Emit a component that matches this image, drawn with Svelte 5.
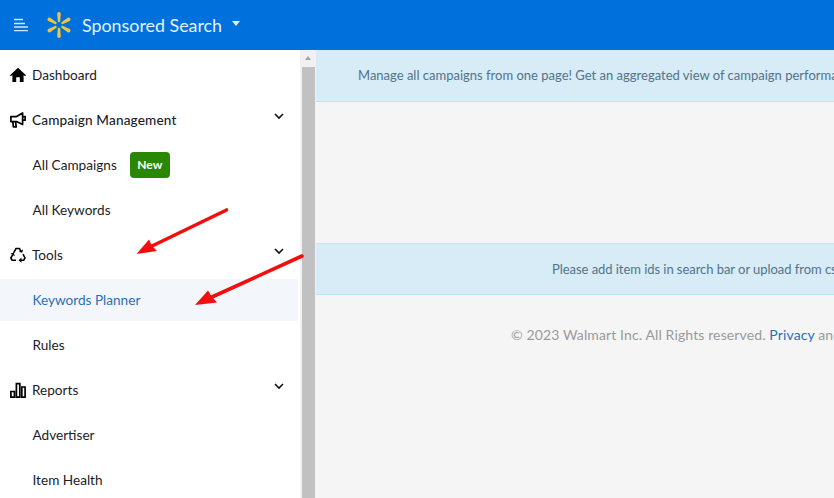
<script>
  const spark = [0, 60, 120, 180, 240, 300];
</script>

<div class="page">
  <header class="top">
    <svg class="burger" width="16" height="14" viewBox="0 0 16 14" aria-hidden="true">
      <path d="M0 1.5H9M0 5.5H11M0 9H14M0 12.7H14" stroke="#cfe6fb" stroke-width="1.3" fill="none" />
    </svg>
    <svg class="spark" width="28" height="28" viewBox="0 0 28 28" aria-hidden="true">
      {#each spark as a}
        <path d="M12.2 2.8a1.8 1.8 0 0 1 3.6 0L15.2 10a1.2 1.2 0 0 1-2.4 0Z" fill="#f2c33d" transform="rotate({a} 14 14)" />
      {/each}
    </svg>
    <span class="brand">Sponsored Search</span>
    <span class="caret"></span>
  </header>

  <div class="body">
    <nav class="side">
      <div class="row head">
        <svg class="ico" width="16" height="16" viewBox="0 0 16 16" aria-hidden="true">
          <path d="M8 0.8 0 8.2 1 9.2 2.4 8V15H6.2V10.3H9.8V15H13.6V8L15 9.2 16 8.2Z" fill="#000" />
        </svg>
        <span>Dashboard</span>
      </div>
      <div class="row head strong">
        <svg class="ico" width="16" height="16" viewBox="0 0 16 16" aria-hidden="true">
          <path d="M0.9 4.6H6.6L12.6 1V12.4L6.6 9.6H0.9Z M12.6 4.6H15.2V8.2H12.6 M2.8 9.8 3.4 14.9H6.2L5.6 9.8" fill="none" stroke="#000" stroke-width="1.7" stroke-linejoin="round" />
        </svg>
        <span>Campaign Management</span>
        <svg class="chev" width="10" height="7" viewBox="0 0 10 7" aria-hidden="true"><path d="M1 1 5 5 9 1" fill="none" stroke="#111" stroke-width="1.6" /></svg>
      </div>
      <div class="row sub">
        <span>All Campaigns</span>
        <span class="badge">New</span>
      </div>
      <div class="row sub"><span>All Keywords</span></div>
      <div class="row head">
        <svg class="ico" width="16" height="16" viewBox="0 0 16 16" aria-hidden="true">
          <path d="M3.6 5.8 6 1.5H9.4L11 4.3M13 7.2 15 11 13.7 13.2H10.6M6 13.2H2.1L0.8 11 2.8 7.6" fill="none" stroke="#000" stroke-width="1.6" />
          <path d="M8.7 4.8 12.2 5.7 13.1 2.4ZM11.5 10.6 8.6 13.2 11.5 15.8ZM0.4 6.6 3.7 5.8 4.8 9.2Z" fill="#000" />
        </svg>
        <span>Tools</span>
        <svg class="chev" width="10" height="7" viewBox="0 0 10 7" aria-hidden="true"><path d="M1 1 5 5 9 1" fill="none" stroke="#111" stroke-width="1.6" /></svg>
      </div>
      <div class="row sub active"><span>Keywords Planner</span></div>
      <div class="row sub"><span>Rules</span></div>
      <div class="row head">
        <svg class="ico" width="16" height="16" viewBox="0 0 16 16" aria-hidden="true">
          <path d="M0.9 9.5H4.4V15.1H0.9ZM6.4 1.7H9.8V15.1H6.4ZM11.8 5H15.1V15.1H11.8Z" fill="none" stroke="#000" stroke-width="1.7" />
        </svg>
        <span>Reports</span>
        <svg class="chev" width="10" height="7" viewBox="0 0 10 7" aria-hidden="true"><path d="M1 1 5 5 9 1" fill="none" stroke="#111" stroke-width="1.6" /></svg>
      </div>
      <div class="row sub"><span>Advertiser</span></div>
      <div class="row sub"><span>Item Health</span></div>
    </nav>

    <div class="scroll">
      <div class="up"></div>
      <div class="thumb"></div>
    </div>

    <main class="main">
      <div class="note first"><span>Manage all campaigns from one page! Get an aggregated view of campaign performance and manage them with ease.</span></div>
      <div class="note second"><span>Please add item ids in search bar or upload from csv file to see keyword suggestions here.</span></div>
      <p class="foot">© 2023 Walmart Inc. All Rights reserved. <a href="#privacy">Privacy</a> and Terms of use apply to this page.</p>
    </main>
  </div>

  <svg class="arrows" width="834" height="498" viewBox="0 0 834 498" aria-hidden="true">
    <path d="M226.5 210 152 246" stroke="#f40d0d" stroke-width="3.6" stroke-linecap="round" />
    <path d="M136.5 254 149 239.5 152 246 157 251Z" fill="#f40d0d" />
    <path d="M302 256 212 297" stroke="#f40d0d" stroke-width="3.6" stroke-linecap="round" />
    <path d="M195 305 208 290.5 212 297 217 302.5Z" fill="#f40d0d" />
  </svg>
</div>

<style>
  :global(body) { margin: 0; }
  .page {
    position: relative;
    width: 834px;
    height: 498px;
    overflow: hidden;
    font-family: Lato, "Noto Sans", sans-serif;
    background: #f5f5f5;
  }
  .top {
    height: 50px;
    background: #0071dc;
    display: flex;
    align-items: center;
    padding-left: 14px;
    box-sizing: border-box;
    color: #e6f1fc;
  }
  .burger { margin-right: 15px; }
  .spark { margin-right: 9px; }
  .brand { font-size: 17.85px; margin-bottom: 1px; }
  .caret {
    margin-left: 10px;
    margin-bottom: 3px;
    border-left: 4.5px solid transparent;
    border-right: 4.5px solid transparent;
    border-top: 5px solid #e6f1fc;
  }
  .body { display: flex; height: 448px; }
  .side { width: 300px; flex: none; background: #fff; padding-top: 2px; box-sizing: border-box; }
  .row {
    height: 45px;
    display: flex;
    align-items: center;
    font-size: 13.6px;
    color: #1c1c28;
    box-sizing: border-box;
    position: relative;
  }
  .head { padding-left: 10px; }
  .ico { width: 16px; margin-right: 6px; flex: none; }
  .sub { padding-left: 32.5px; }
  .strong { font-weight: 500; letter-spacing: 0.15px; }
  .chev { position: absolute; right: 16px; top: 16px; }
  .active {
    height: 42px;
    margin: 2px 2px 1px 0;
    background: #f3f7fc;
    color: #2a6fb8;
  }
  .badge {
    margin-left: 13px;
    width: 40px;
    height: 26px;
    border-radius: 4px;
    background: #2a8703;
    color: #fff;
    font-size: 12px;
    font-weight: 700;
    display: flex;
    align-items: center;
    justify-content: center;
  }
  .scroll { width: 16px; flex: none; background: #f1f1f1; display: flex; flex-direction: column; align-items: flex-start; padding-left: 2px; box-sizing: border-box; }
  .up {
    width: 13px;
    height: 17px;
    position: relative;
  }
  .up::before {
    content: "";
    position: absolute;
    left: 3px;
    top: 6px;
    border-left: 3.5px solid transparent;
    border-right: 3.5px solid transparent;
    border-bottom: 4px solid #a3a3a3;
  }
  .thumb { width: 13px; flex: 1; background: #c1c1c1; }
  .main { flex: 1; min-width: 0; overflow: hidden; background: #f5f5f5; }
  .note {
    height: 52px;
    background: #d7ecf6;
    color: #52738a;
    font-size: 13px;
    display: flex;
    align-items: center;
    white-space: nowrap;
    box-sizing: border-box;
    border-bottom: 1px solid #bfe3ee;
  }
  .first { padding-left: 42px; padding-bottom: 2px; }
  .second { margin-top: 141px; padding-left: 236px; border-top: 1px solid #c9e5f0; letter-spacing: -0.05px; }
  .foot {
    margin: 31px 0 0 195px;
    font-size: 14px;
    color: #9a9a9a;
    white-space: nowrap;
    letter-spacing: 0.125px;
  }
  .foot a { color: #2a6fb8; text-decoration: none; }
  .arrows { position: absolute; left: 0; top: 0; pointer-events: none; }
</style>
